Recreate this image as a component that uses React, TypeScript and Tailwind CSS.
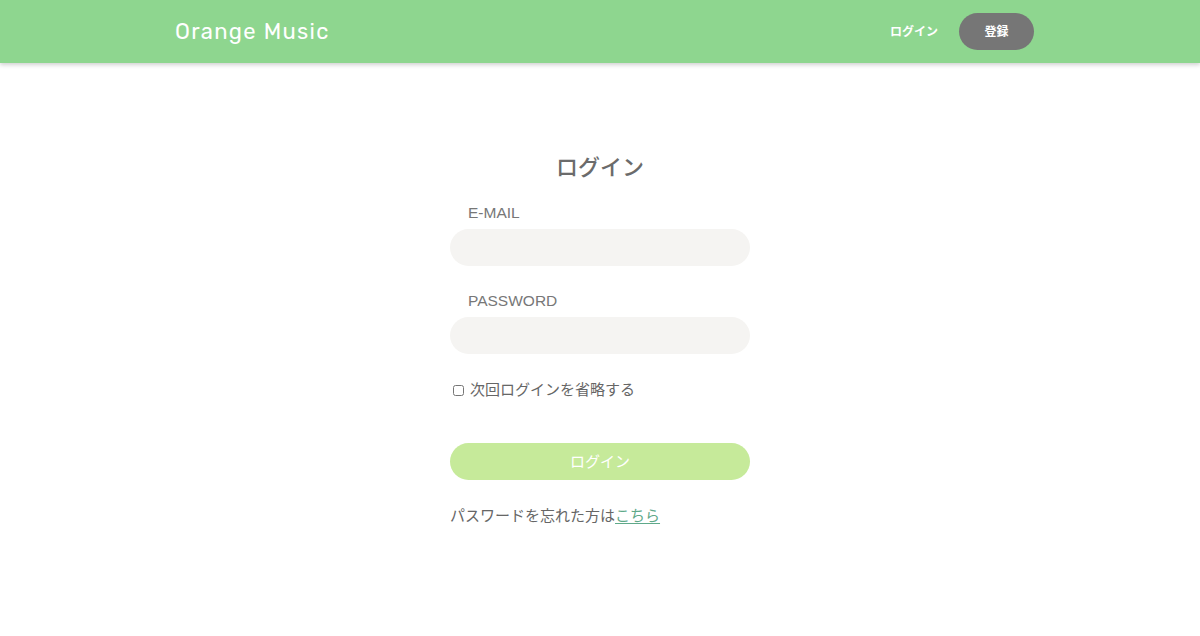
import React from "react";

const FONT = { fontFamily: '"Noto Sans", "Noto Sans CJK JP", sans-serif' };

export default function App() {
  return (
    <div className="min-h-[636px] bg-white" style={FONT}>
      <header className="h-[63px] bg-[#8ed68f] shadow-[0_2px_4px_rgba(0,0,0,0.18)]">
        <div className="flex h-full items-center justify-between pl-[175px] pr-[166px]">
          <span className="text-[22px] font-normal tracking-[0.06em] text-white" style={{ fontFamily: '"Rubik", Inter, sans-serif' }}>
            Orange Music
          </span>
          <nav className="flex items-center gap-[21px]">
            <a className="text-[12px] font-bold text-white">ログイン</a>
            <a className="flex h-[37px] w-[75px] items-center justify-center rounded-full bg-[#767676] text-[12px] font-bold text-white">
              登録
            </a>
          </nav>
        </div>
      </header>

      <main className="flex justify-center pt-[88px]">
        <form className="w-[300px]" onSubmit={(e) => e.preventDefault()}>
          <h1 className="text-center text-[22px] font-medium leading-[30px] text-[#6b6b6b]">ログイン</h1>

          <label className="mt-[21px] block pl-[18px] text-[15.5px] leading-[22px] text-[#777]" style={{ fontFamily: '"Liberation Sans", sans-serif' }}>
            E-MAIL
          </label>
          <input type="email" className="mt-[5px] block h-[37px] w-full rounded-full bg-[#f5f4f2] px-4 outline-none" />

          <label className="mt-[24px] block pl-[18px] text-[15.5px] leading-[22px] text-[#777]" style={{ fontFamily: '"Liberation Sans", sans-serif' }}>
            PASSWORD
          </label>
          <input type="password" className="mt-[5px] block h-[37px] w-full rounded-full bg-[#f5f4f2] px-4 outline-none" />

          <label className="mt-[24px] flex items-center gap-[6px] pl-[3px] text-[15px] leading-[22px] text-[#666]">
            <input type="checkbox" className="mt-[3px] h-[11px] w-[11px]" />
            次回ログインを省略する
          </label>

          <button className="mt-[43px] block h-[37px] w-full rounded-full bg-[#c6ea9a] text-[15px] text-white">
            ログイン
          </button>

          <p className="mt-[24px] text-[15px] leading-[22px] text-[#666]">
            パスワードを忘れた方は
            <a className="text-[#5fa98a] underline underline-offset-2">こちら</a>
          </p>
        </form>
      </main>
    </div>
  );
}
